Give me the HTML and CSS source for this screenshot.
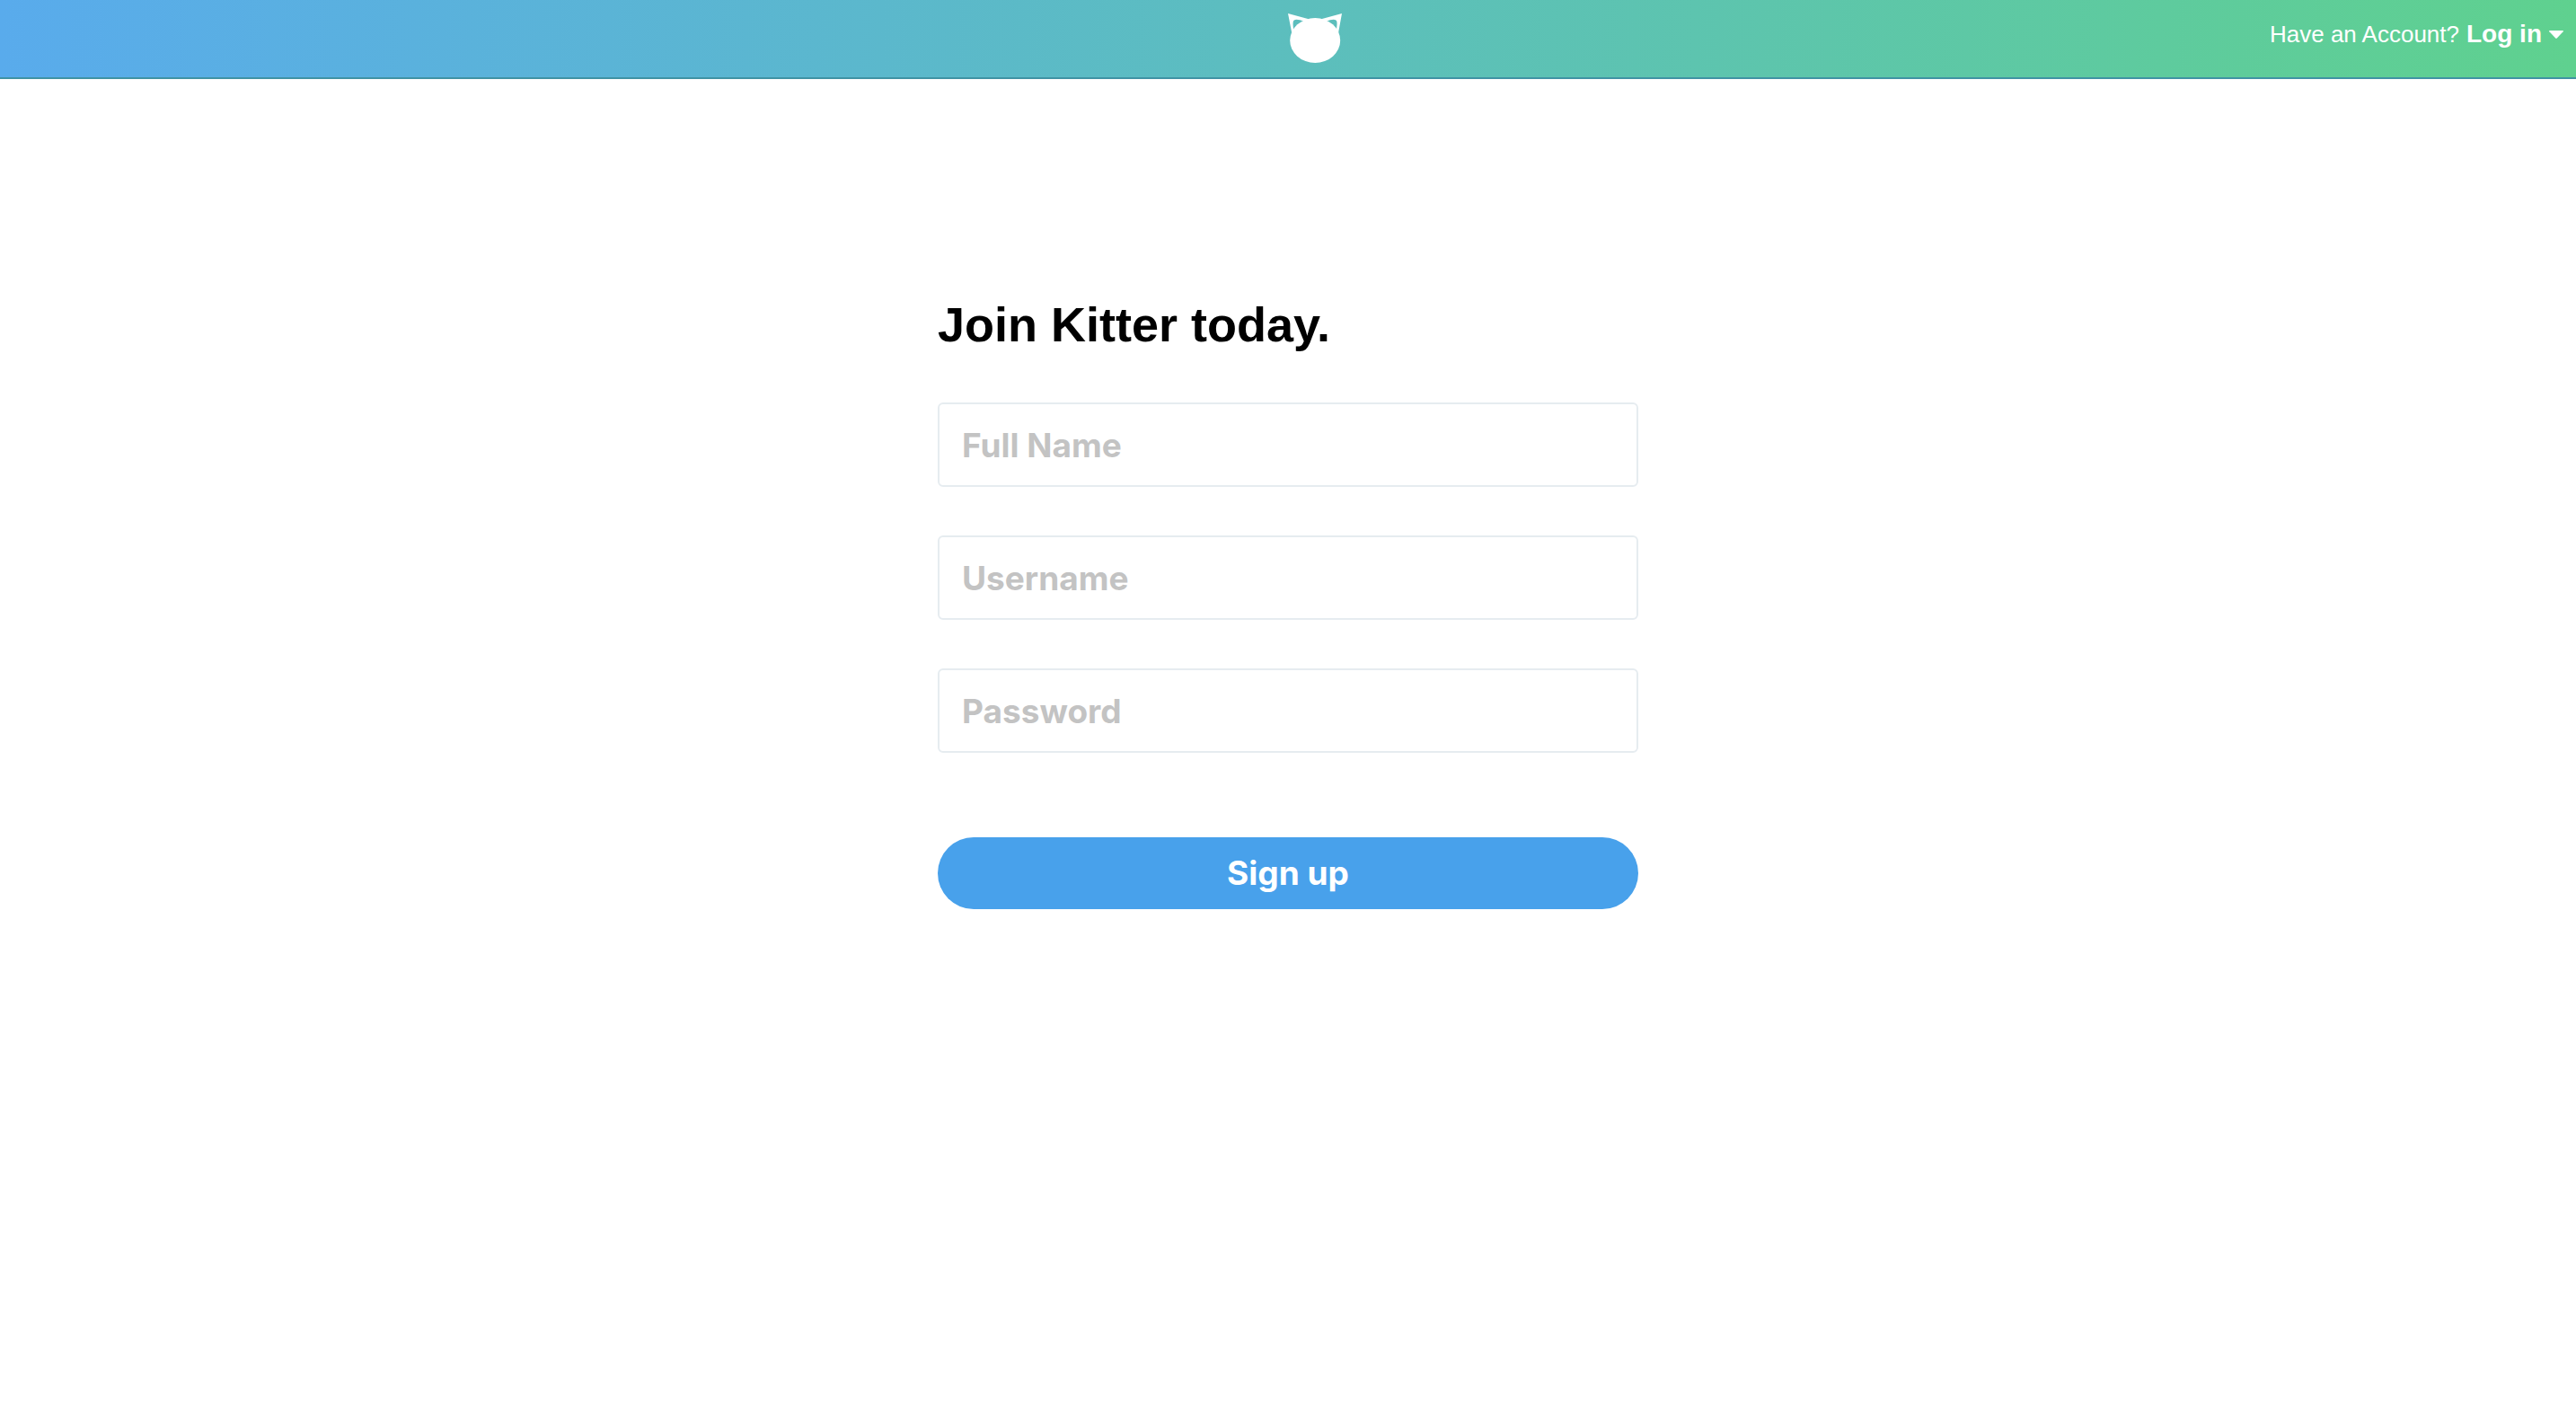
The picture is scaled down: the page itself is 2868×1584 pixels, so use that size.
FILE: index.html
```html
<!DOCTYPE html>
<html lang="en">
<head>
<meta charset="utf-8">
<meta name="viewport" content="width=device-width, initial-scale=1">
<title>Join Kitter</title>
<link rel="stylesheet" href="styles.css">
</head>
<body>
<header class="topbar">
  <div class="topbar-main">
    <a class="logo" href="#" aria-label="Kitter home">
      <svg width="60" height="55" viewBox="0 0 60 55" fill="#fff" aria-hidden="true">
        <path fill-rule="evenodd" d="M0 0 L24 6.5 L16 14 L4.5 23 Z M6.4 19 C5.4 12 5.2 8.6 6.8 7.4 C8.6 6.2 12.5 6.6 18 8.8 L15 14 Z"/>
        <path fill-rule="evenodd" d="M60 0 L36 6.5 L44 14 L55.8 23 Z M53.8 19 C54.8 12 55 8.6 53.4 7.4 C51.6 6.2 47.7 6.6 42.2 8.8 L45 14 Z"/>
        <ellipse cx="30.2" cy="30" rx="28" ry="25"/>
      </svg>
    </a>
    <div class="account">
      <span>Have an Account?</span>
      <button class="login" type="button">Log in
        <svg width="16" height="9" viewBox="0 0 16 9" fill="#fff" aria-hidden="true"><path d="M.6 0H15.4Q16.3 .3 15.6 1.2L8.8 8.5Q8 9.2 7.2 8.5L.4 1.2Q-.3 .3 .6 0Z"/></svg>
      </button>
    </div>
  </div>
</header>
<main class="join">
  <h1 class="title">Join Kitter today.</h1>
  <form class="form">
    <input class="field" type="text" name="fullname" placeholder="Full Name" aria-label="Full Name">
    <input class="field" type="text" name="username" placeholder="Username" aria-label="Username">
    <input class="field" type="password" name="password" placeholder="Password" aria-label="Password">
    <button class="submit" type="submit">Sign up</button>
  </form>
</main>
</body>
</html>
```
FILE: styles.css
```css
* {
  box-sizing: border-box;
}

body {
  margin: 0;
  background: #fff;
  color: #000;
  font-family: "Liberation Sans", Arial, sans-serif;
}

.topbar {
  display: grid;
  grid-template-columns: 1fr 1fr;
  height: 88px;
  border-bottom: 2px solid #4093a4;
  background: linear-gradient(to right, #59abec, #5fd18f) border-box;
}

.topbar-main {
  grid-column: 2;
  display: flex;
  justify-content: space-between;
  align-items: flex-start;
  padding: 15px 14px 0 0;
}

.logo,
.logo svg {
  display: block;
}

.account {
  display: flex;
  align-items: baseline;
  gap: 8px;
  padding-top: 7px;
  color: #fff;
  font-size: 26px;
  line-height: 32px;
}

.login {
  display: flex;
  align-items: center;
  gap: 8px;
  padding: 0;
  border: 0;
  background: none;
  color: inherit;
  font: bold 28px/32px "Liberation Sans", Arial, sans-serif;
  cursor: pointer;
}

.join {
  width: 100%;
  max-width: 780px;
  margin: 0 auto;
  padding-top: 240px;
}

.title {
  margin: 0 0 54px;
  font-size: 54px;
  line-height: 66px;
}

.form {
  display: flex;
  flex-direction: column;
  gap: 54px;
}

.field {
  width: 100%;
  height: 94px;
  padding: 0 25px;
  border: 2px solid #e6ecf0;
  border-radius: 6px;
  background: #fff;
  color: #000;
  font: bold 37px/44px Inter, sans-serif;
}

.field::placeholder {
  color: #c3c3c3;
  opacity: 1;
}

.submit {
  height: 80px;
  margin-top: 40px;
  border: 0;
  border-radius: 40px;
  background: #48a1eb;
  color: #fff;
  font: bold 37px/44px Inter, sans-serif;
  cursor: pointer;
}
```
